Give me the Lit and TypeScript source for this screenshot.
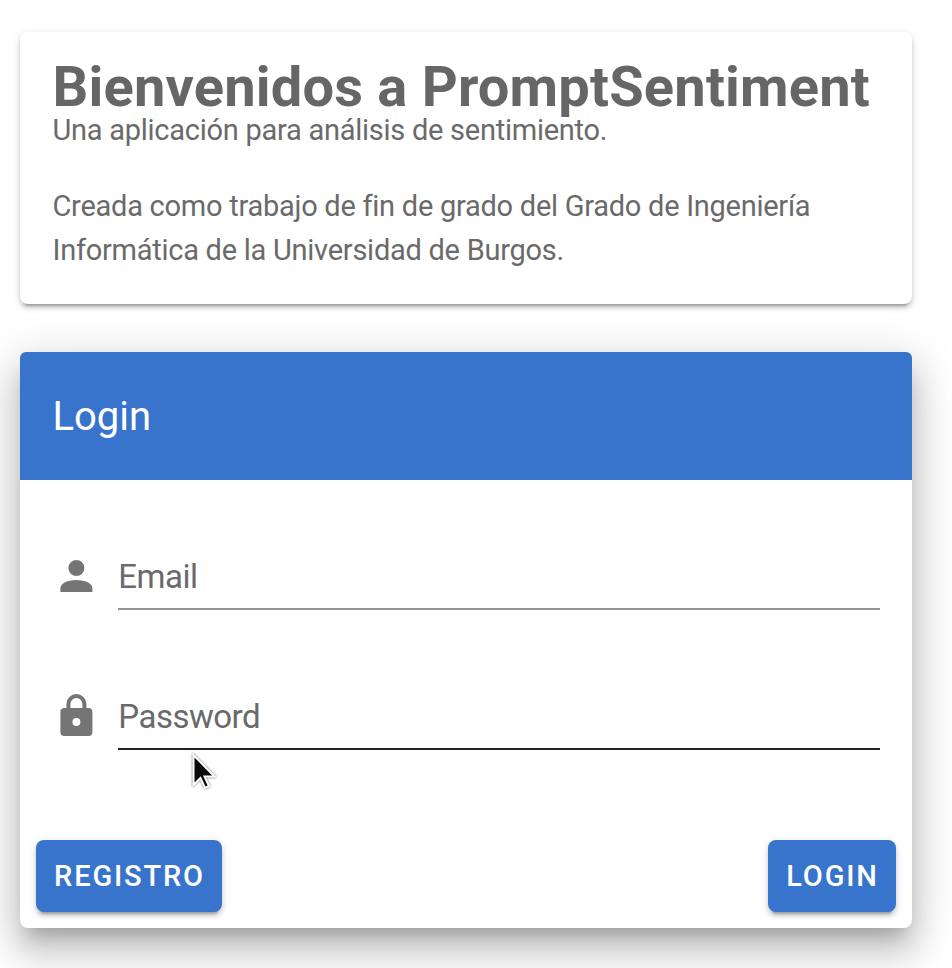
import { LitElement, html, css, svg } from "lit";
import { customElement } from "lit/decorators.js";

const ACCOUNT =
  "M12 4a4 4 0 0 1 4 4 4 4 0 0 1-4 4 4 4 0 0 1-4-4 4 4 0 0 1 4-4m0 10c4.42 0 8 1.79 8 4v2H4v-2c0-2.21 3.58-4 8-4z";
const LOCK =
  "M12 17a2 2 0 0 0 2-2 2 2 0 0 0-2-2 2 2 0 0 0-2 2 2 2 0 0 0 2 2m6-9a2 2 0 0 1 2 2v10a2 2 0 0 1-2 2H6a2 2 0 0 1-2-2V10a2 2 0 0 1 2-2h1V6a5 5 0 0 1 5-5 5 5 0 0 1 5 5v2h1m-6-5a3 3 0 0 0-3 3v2h6V6a3 3 0 0 0-3-3z";

const icon = (d: string) =>
  html`<svg class="icon" viewBox="0 0 24 24">${svg`<path fill="currentColor" d=${d}></path>`}</svg>`;

@customElement("app-root")
export class AppRoot extends LitElement {
  static styles = css`
    :host {
      display: block;
      box-sizing: border-box;
      height: 968px;
      overflow: hidden;
      padding: 32px 40px 0 20px;
      background: #fff;
      font-family: Roboto, "Liberation Sans", sans-serif;
      position: relative;
    }
    .card {
      box-sizing: border-box;
      background: #fff;
      border-radius: 8px;
    }
    .intro {
      height: 272px;
      padding: 33px 32px 0 32.5px;
      color: #666;
      box-shadow: 0 6px 2px -4px rgba(0, 0, 0, 0.2),
        0 4px 4px 0 rgba(0, 0, 0, 0.14), 0 2px 10px 0 rgba(0, 0, 0, 0.12);
    }
    .title {
      margin: 0 0 -1px;
      font-size: 56px;
      line-height: 44px;
      font-weight: 700;
      letter-spacing: 0.2px;
      white-space: nowrap;
    }
    .text {
      margin: 0 0 32px;
      font-size: 29px;
      line-height: 44px;
      letter-spacing: -0.26px;
      color: #6a6a6a;
      white-space: nowrap;
    }
    .login {
      height: 576px;
      margin-top: 48px;
      display: flex;
      flex-direction: column;
      box-shadow: 0 14px 16px -8px rgba(0, 0, 0, 0.2),
        0 24px 34px 4px rgba(0, 0, 0, 0.14),
        0 10px 44px 8px rgba(0, 0, 0, 0.12);
    }
    .bar {
      height: 128px;
      box-sizing: border-box;
      padding: 0 32.5px;
      display: flex;
      align-items: center;
      background: #3874cc;
      color: #fff;
      border-radius: 6px 6px 0 0;
      font-size: 40px;
    }
    .form {
      flex: 1;
      padding: 64px 32px 0;
    }
    .field {
      display: flex;
      gap: 18px;
      height: 66px;
      margin-bottom: 74px;
    }
    .icon {
      width: 48px;
      height: 48px;
      margin-top: 8px;
      color: #757575;
      flex: none;
    }
    .icon path {
      transform: translateX(0.2px);
    }
    .line {
      flex: 1;
      box-sizing: border-box;
      border-bottom: 2px solid #949494;
      color: #6a6a6a;
      font-size: 33px;
      letter-spacing: -0.5px;
      line-height: 65px;
      text-indent: 0.3px;
    }
    .hover {
      border-color: #212121;
    }
    .actions {
      display: flex;
      justify-content: space-between;
      padding: 16px;
    }
    .btn {
      height: 72px;
      border: 0;
      padding: 0 0 1px 1px;
      border-radius: 8px;
      background: #3874cc;
      color: #fff;
      font: 500 29px Roboto, sans-serif;
      letter-spacing: 1.85px;
      box-shadow: 0 6px 2px -4px rgba(0, 0, 0, 0.2),
        0 4px 4px 0 rgba(0, 0, 0, 0.14), 0 2px 10px 0 rgba(0, 0, 0, 0.12);
    }
    .register {
      width: 186px;
    }
    .enter {
      width: 128px;
    }
    .pointer {
      position: absolute;
      left: 190px;
      top: 751px;
      width: 30px;
      height: 44px;
      filter: drop-shadow(0 0 1px rgba(0, 0, 0, 0.6));
    }
  `;

  render() {
    return html`
      <section class="card intro">
        <h1 class="title">Bienvenidos a PromptSentiment</h1>
        <p class="text">Una aplicación para análisis de sentimiento.</p>
        <p class="text">
          Creada como trabajo de fin de grado del Grado de Ingeniería<br />Informática de la
          Universidad de Burgos.
        </p>
      </section>
      <section class="card login">
        <header class="bar">Login</header>
        <div class="form">
          <div class="field">
            ${icon(ACCOUNT)}
            <div class="line">Email</div>
          </div>
          <div class="field">
            ${icon(LOCK)}
            <div class="line hover">Password</div>
          </div>
        </div>
        <footer class="actions">
          <button class="btn register">REGISTRO</button>
          <button class="btn enter">LOGIN</button>
        </footer>
      </section>
      <svg class="pointer" viewBox="0 0 30 44">
        <path
          d="M3.500 4v30l7-7 4.500 10 4-2-4.500-9.500h10z"
          fill="#0a0a0a"
          stroke="#fff"
          stroke-width="2"
        ></path>
      </svg>
    `;
  }
}
